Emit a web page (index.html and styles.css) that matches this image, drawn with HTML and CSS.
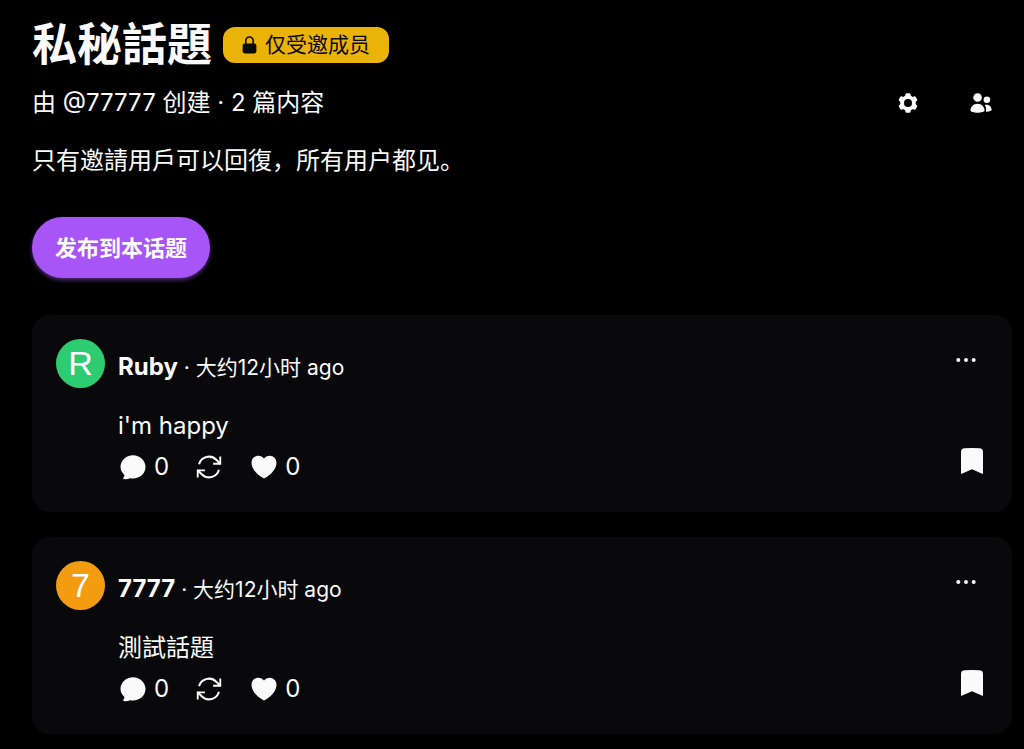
FILE: index.html
```html
<!DOCTYPE html>
<html lang="zh">
<head>
<meta charset="utf-8">
<meta name="viewport" content="width=device-width, initial-scale=1">
<title>私秘話題</title>
<link rel="stylesheet" href="styles.css">
</head>
<body>
<svg class="sprite" aria-hidden="true">
  <symbol id="chat" viewBox="0 0 24 24"><path fill="currentColor" d="M5.337 21.718a6.707 6.707 0 0 1-.533-.074.75.75 0 0 1-.44-1.223 3.73 3.73 0 0 0 .814-1.686c.023-.115-.022-.317-.254-.543C3.274 16.587 2 14.410 2 12c0-5.200 4.428-9.400 10-9.400s10 4.200 10 9.400-4.428 9.200-10 9.200c-.833 0-1.643-.097-2.417-.279a6.721 6.721 0 0 1-4.246.797Z"/></symbol>
  <symbol id="repost" viewBox="0 0 24 24"><path fill="none" stroke="currentColor" stroke-width="1.500" stroke-linecap="square" stroke-linejoin="miter" d="M16.020 9.350h4.990V4.360M2.990 19.640v-4.990h4.990"/><path fill="none" stroke="currentColor" stroke-width="1.600" d="m2.985 14.652 3.180 3.183a8.250 8.250 0 0 0 13.803-3.700M4.031 9.865a8.250 8.250 0 0 1 13.803-3.700l3.181 3.182"/></symbol>
  <symbol id="heart" viewBox="0 0 24 24"><path fill="currentColor" d="M12 21.1c-.25 0-.5-.1-.75-.24C7.4 18.6 2 14 2 8.5 2 5.4 4.4 2.9 7.4 2.9c1.9 0 3.6.9 4.6 2.3 1-1.4 2.7-2.3 4.6-2.3 3 0 5.4 2.5 5.4 5.6 0 5.500-5.400 10.100-9.250 12.360-.25.14-.5.24-.75.24Z"/></symbol>
  <symbol id="bookmark" viewBox="0 0 24 26"><path fill="currentColor" d="M1 4Q1 .5 4.500.300Q12-.3 19.500.300Q23 .5 23 4V25.200Q23 26 22.200 25.700L12 21.200 1.800 25.700Q1 26 1 25.200Z"/></symbol>
  <symbol id="dots" viewBox="0 0 20 6"><g fill="currentColor"><circle cx="2.300" cy="3" r="2"/><circle cx="10" cy="3" r="2"/><circle cx="17.700" cy="3" r="2"/></g></symbol>
</svg>

<main class="page">
  <header class="topic">
    <div class="title-row">
      <h1 class="title">私秘話題</h1>
      <span class="badge">
        <svg class="lock" viewBox="0 0 14 17" aria-hidden="true"><path fill="none" stroke="currentColor" stroke-width="1.500" d="M3.500 8V4.500a3.500 3.500 0 0 1 7 0V8"/><rect x=".5" y="7" width="13" height="9.500" rx="2" fill="currentColor"/></svg>
        仅受邀成员
      </span>
    </div>
    <div class="meta-row">
      <p class="meta">由 @77777 创建 · 2 篇内容</p>
      <div class="tools">
        <button class="icon-button" type="button" aria-label="设置">
          <svg class="gear" viewBox="0 0 20 20" aria-hidden="true"><g fill="currentColor"><circle cx="10" cy="10" r="7.800"/><rect x="7.300" y=".2" width="5.400" height="19.600" rx="1.600"/><rect x="7.300" y=".2" width="5.400" height="19.600" rx="1.600" transform="rotate(60 10 10)"/><rect x="7.300" y=".2" width="5.400" height="19.600" rx="1.600" transform="rotate(120 10 10)"/></g><circle class="gear-hole" cx="10" cy="10" r="4"/></svg>
        </button>
        <button class="icon-button" type="button" aria-label="成员">
          <svg class="people" viewBox="0 0 22 20" aria-hidden="true"><g fill="currentColor"><circle cx="7.600" cy="4.500" r="4.300"/><circle cx="16.900" cy="6.800" r="3.300"/><path d="M.5 17.500C.5 13.500 3.600 10.700 7.500 10.700s7 2.800 7 6.800c0 1.400-3.300 2.200-7 2.200s-7-.8-7-2.200Z"/><path d="M14.800 12.100c3.600-1.200 6.900 1.200 6.900 5 0 .9-2.400 1.700-5.800 1.600.6-2.300.2-4.700-1.100-6.600Z"/></g></svg>
        </button>
      </div>
    </div>
    <p class="description">只有邀請用戶可以回復，所有用户都见。</p>
    <button class="publish" type="button">发布到本话题</button>
  </header>

  <section class="posts" aria-label="帖子">
    <article class="post">
      <div class="avatar avatar-green">R</div>
      <div class="content">
        <div class="byline"><strong class="name">Ruby</strong> · <time>大约12小时 ago</time></div>
        <p class="text">i'm happy</p>
        <div class="actions">
          <button class="action" type="button" aria-label="评论 0"><svg class="icon"><use href="#chat"/></svg>0</button>
          <button class="action" type="button" aria-label="转发"><svg class="icon"><use href="#repost"/></svg></button>
          <button class="action" type="button" aria-label="喜欢 0"><svg class="icon"><use href="#heart"/></svg>0</button>
        </div>
      </div>
      <div class="side">
        <button class="more" type="button" aria-label="更多"><svg class="dots"><use href="#dots"/></svg></button>
        <button class="save" type="button" aria-label="收藏"><svg class="mark"><use href="#bookmark"/></svg></button>
      </div>
    </article>

    <article class="post">
      <div class="avatar avatar-orange">7</div>
      <div class="content">
        <div class="byline"><strong class="name">7777</strong> · <time>大约12小时 ago</time></div>
        <p class="text">測試話題</p>
        <div class="actions">
          <button class="action" type="button" aria-label="评论 0"><svg class="icon"><use href="#chat"/></svg>0</button>
          <button class="action" type="button" aria-label="转发"><svg class="icon"><use href="#repost"/></svg></button>
          <button class="action" type="button" aria-label="喜欢 0"><svg class="icon"><use href="#heart"/></svg>0</button>
        </div>
      </div>
      <div class="side">
        <button class="more" type="button" aria-label="更多"><svg class="dots"><use href="#dots"/></svg></button>
        <button class="save" type="button" aria-label="收藏"><svg class="mark"><use href="#bookmark"/></svg></button>
      </div>
    </article>
  </section>
</main>
</body>
</html>
```

FILE: styles.css
```css
* {
  box-sizing: border-box;
}

body {
  margin: 0;
  background: #000;
  color: #fafafa;
  font-family: Inter, "Noto Sans CJK SC", sans-serif;
  font-size: 24px;
  line-height: 36px;
}

h1,
p {
  margin: 0;
}

button {
  display: flex;
  align-items: center;
  justify-content: center;
  padding: 0;
  border: 0;
  background: none;
  color: inherit;
  font: inherit;
  cursor: pointer;
}

svg {
  display: block;
  flex: none;
}

.sprite {
  position: absolute;
  width: 0;
  height: 0;
}

.page {
  padding: 20px 12px 15px 32px;
}

.title-row {
  display: flex;
  align-items: center;
  gap: 11px;
}

.title {
  font-size: 45px;
  font-weight: 700;
  line-height: 50px;
}

.badge {
  display: flex;
  align-items: center;
  gap: 8px;
  padding: 0 19px;
  border-radius: 12px;
  background: #eab308;
  color: #0a0a0a;
  font-size: 21px;
}

.lock {
  width: 15px;
  height: 18px;
}

.meta-row {
  display: flex;
  align-items: center;
  justify-content: space-between;
  margin-top: 9px;
  padding-right: 7px;
}

.tools {
  display: flex;
  gap: 25px;
}

.icon-button {
  width: 48px;
  height: 48px;
}

.gear {
  width: 20px;
  height: 20px;
}

.gear-hole {
  fill: #000;
}

.people {
  width: 22px;
  height: 20px;
}

.description {
  margin-top: 16px;
}

.publish {
  height: 61px;
  margin-top: 38px;
  padding: 0 23px;
  border-radius: 31px;
  background: #a855f7;
  box-shadow: 0 2px 4px rgba(168, 85, 247, 0.5);
  font-size: 22px;
  font-weight: 700;
}

.posts {
  display: grid;
  gap: 25px;
  margin-top: 37px;
}

.post {
  display: flex;
  gap: 13px;
  padding: 24px;
  border-radius: 18px;
  background: #09090b;
}

.avatar {
  flex: none;
  width: 49px;
  height: 49px;
  border-radius: 50%;
  color: #fff;
  font-family: "Liberation Sans", Arial, sans-serif;
  font-size: 34px;
  line-height: 49px;
  text-align: center;
}

.avatar-green {
  background: #2ecc71;
}

.avatar-orange {
  background: #f39c12;
}

.content {
  flex: 1;
  min-width: 0;
  padding: 12px 0 3px;
}

.byline {
  font-size: 21px;
  line-height: 32px;
}

.name {
  font-size: 24px;
  font-weight: 700;
}

.text {
  margin-top: 24px;
}

.actions {
  display: flex;
  gap: 25px;
  margin-top: 5px;
}

.action {
  gap: 6px;
  height: 36px;
}

.icon {
  width: 30px;
  height: 30px;
}

.side {
  display: flex;
  flex-direction: column;
  align-items: flex-end;
  justify-content: space-between;
  padding-bottom: 9px;
}

.more {
  width: 44px;
  height: 42px;
}

.dots {
  width: 20px;
  height: 6px;
}

.save {
  width: 32px;
  height: 36px;
}

.mark {
  width: 24px;
  height: 26px;
}
```
